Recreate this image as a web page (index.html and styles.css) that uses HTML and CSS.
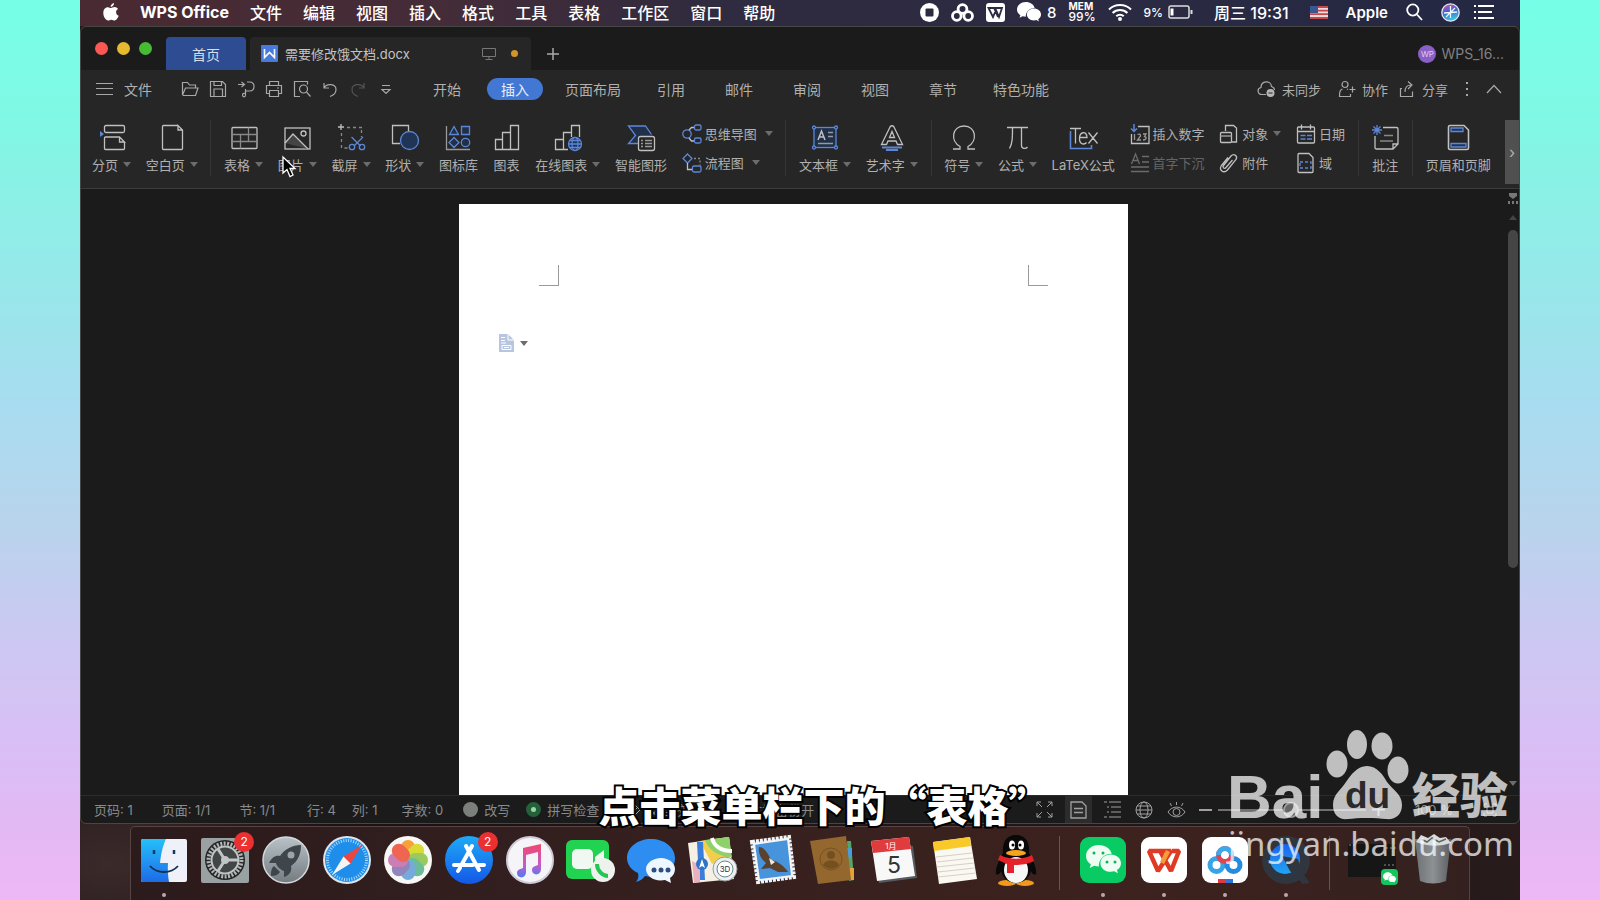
FILE: index.html
```html
<!DOCTYPE html>
<html lang="zh-CN">
<head>
<meta charset="UTF-8" />
<meta name="viewport" content="width=device-width, initial-scale=1" />
<title>需要修改饿文档.docx</title>
<link rel="stylesheet" href="styles.css">
</head>
<body>
<svg class="sprite" aria-hidden="true">
  <symbol id="wechat" viewBox="0 0 34 28">
    <path d="M12.500 0C5.600 0 0 4.700 0 10.500c0 3.300 1.800 6.200 4.700 8.100L3.600 22.300l4.300-2.200c1.500.4 3 .7 4.600.7C12.100 14.500 17.300 8.500 25 8.500 23.800 3.600 18.700 0 12.500 0z"/>
    <path d="M34 17.600C34 12.900 29.500 9.200 24 9.200s-10 3.700-10 8.400S18.500 26 24 26c1.200 0 2.400-.2 3.500-.5l3.500 1.900-.9-3.100c2.400-1.500 3.900-4 3.900-6.700z"/>
  </symbol>
  <symbol id="bars" viewBox="0 0 28 28">
    <path d="M2.500 16.500h7v10h-7zM9.500 9.500h8v17h-8zM17.500 2.500h8v24h-8z"/>
  </symbol>
</svg>
<div class="desktop">
  <header class="menubar">
    <nav class="menubar-nav">
      <button class="apple" aria-label="苹果菜单"><svg width="16" height="18" viewBox="0 0 16 18" fill="#fff"><path d="M11 0c.2 1.500-1.300 3.900-3.300 3.900C7.400 2.200 9.200.3 11 0zM8 5c.8 0 1.900-1 3.600-1 1.300 0 2.600.7 3.400 1.900-2.900 1.700-2.400 5.600.7 6.900-.7 1.900-2.300 4.700-4 4.700-1.300 0-1.700-.8-3.300-.8s-2.100.8-3.300.8C2.700 17.500.3 13.600.3 10 .3 6.300 2.500 4.200 4.800 4.200 6.200 4.200 7.300 5 8 5z"/></svg></button>
      <button class="app-name">WPS Office</button>
      <button>文件</button>
      <button>编辑</button>
      <button>视图</button>
      <button>插入</button>
      <button>格式</button>
      <button>工具</button>
      <button>表格</button>
      <button>工作区</button>
      <button>窗口</button>
      <button>帮助</button>
    </nav>
    <div class="tray">
      <div class="tray-apps">
        <svg width="19" height="19" viewBox="0 0 19 19"><circle cx="9.500" cy="9.500" r="9.500" fill="#fff"/><rect x="5.500" y="5.500" width="8" height="8" rx="1" fill="#2c2b42"/></svg>
        <svg width="23" height="19" viewBox="0 0 23 19" fill="none" stroke="#fff" stroke-width="2.800"><circle cx="11.500" cy="6" r="4.400"/><circle cx="5.800" cy="13" r="4.300"/><circle cx="17.200" cy="13" r="4.300"/></svg>
        <svg width="19" height="19" viewBox="0 0 19 19"><rect width="19" height="19" rx="3" fill="#fff"/><path d="M2.500 5h13.500l-3 9-3-7-3 7zM8 5l4 9" fill="none" stroke="#2c2b42" stroke-width="1.800"/></svg>
        <span class="tray-count"><svg width="24" height="20" fill="#fff"><use href="#wechat"/></svg>8</span>
        <span class="mem"><b>MEM</b><span>99%</span></span>
        <svg width="24" height="18" viewBox="0 0 24 18" fill="none" stroke="#fff" stroke-width="2"><path d="M1 6.500c6-6 16-6 22 0M4.600 10c4-4 10.800-4 14.800 0M8.300 13.300c2-2 5.400-2 7.400 0"/><circle cx="12" cy="16" r="1" fill="#fff"/></svg>
        <span class="battery">9%<svg width="25" height="14" viewBox="0 0 25 14" fill="none" stroke="#ddd"><rect x="1" y="1" width="20" height="12" rx="2" stroke-width="1.500"/><path d="M4 3.500v7" stroke="#fff" stroke-width="3"/><path d="M23.500 5v4" stroke-width="2"/></svg></span>
      </div>
      <span class="clock">周三 19:31</span>
      <svg class="flag" width="18" height="13" viewBox="0 0 18 13"><path fill="#e8dcdc" d="M0 0h18v13H0z"/><path d="M0 1h18M0 4.600h18M0 8.200h18M0 12h18" stroke="#c8474d" stroke-width="1.800"/><path fill="#3b5690" d="M0 0h8v7H0z"/></svg>
      <b class="account">Apple</b>
      <svg width="17" height="18" viewBox="0 0 17 18" fill="none" stroke="#fff" stroke-width="1.800"><circle cx="6.800" cy="7" r="5.600"/><path d="M11 11.500l5 5.500"/></svg>
      <svg width="19" height="19" viewBox="0 0 19 19"><defs><linearGradient id="siri" x2="0.300" y2="1"><stop stop-color="#ee4fae"/><stop offset=".5" stop-color="#3f63c9"/><stop offset="1" stop-color="#38c4e6"/></linearGradient></defs><circle cx="9.500" cy="9.500" r="8.700" fill="url(#siri)" stroke="#e8e8f4" stroke-width="1.300"/><path d="M3 10l13-1M9.500 3v12M5 14l9-9" stroke="#eaf6ff" stroke-width="1.300"/></svg>
      <svg class="list" width="20" height="14" viewBox="0 0 20 14" stroke="#fff" stroke-width="2"><path d="M0 1h2M4 1h16M0 7h2M4 7h14M0 13h2M4 13h16"/></svg>
    </div>
  </header>

  <div class="window">
    <div class="titlebar">
      <div class="lights"><button class="light red" aria-label="关闭"></button><button class="light yellow" aria-label="最小化"></button><button class="light green" aria-label="全屏"></button></div>
      <button class="home-tab">首页</button>
      <div class="doc-tab">
        <svg width="17" height="17" viewBox="0 0 17 17"><rect width="17" height="17" rx="1" fill="#477bdb"/><path d="M3.500 4v8.500l5-5 5 5V4" fill="none" stroke="#fff" stroke-width="1.600"/></svg>
        <span class="doc-name">需要修改饿文档.docx</span>
        <svg width="14" height="14" viewBox="0 0 14 14" fill="none" stroke="#777"><path d="M.5 1.500h13v8H.5zM7 9.500v3M3.500 12.500h7"/></svg>
        <i class="unsaved"></i>
      </div>
      <button class="new-tab" aria-label="新建标签"><svg width="12" height="12" viewBox="0 0 12 12" stroke="#aaa" stroke-width="1.500"><path d="M6 0v12M0 6h12"/></svg></button>
      <button class="user"><span class="avatar">WP</span>WPS_16...</button>
    </div>

    <div class="menurow">
      <button class="file-btn"><svg width="17" height="14" viewBox="0 0 17 14" stroke="#8c8c8c"><path d="M0 1.500h17M0 6.500h17M0 12.500h17"/></svg>文件</button>
      <div class="quick">
        <button aria-label="打开"><svg viewBox="0 0 18 18"><path d="M1.500 15V2.500h5l2 2.500h6v3M1.500 15l3-7H17l-2.500 7.500h-13"/></svg></button>
        <button aria-label="保存"><svg viewBox="0 0 18 18"><path d="M1.500 1.500h12l3 3v12h-15zM5 16V9h8.500v7M5 1.500v4h7.500v-4"/></svg></button>
        <button aria-label="转换"><svg viewBox="0 0 18 18"><path d="M1 4.500h6M4.500 2l3 2.500-3 2.500M10 2h2.500c6 0 6 9 0 9H8.500v4c0 2.500-3 2.500-3 0 0-2 1.500-1.500 3-1.500M8.500 11V9"/></svg></button>
        <button aria-label="打印"><svg viewBox="0 0 18 18"><path d="M4.500 5V1.500h9V5M4 13.500H1.500v-8h15v8H14M4.500 10.500h9v6h-9zM12 8h2"/></svg></button>
        <button aria-label="打印预览"><svg viewBox="0 0 18 18"><path d="M7 16.500H1.500v-15h13v3"/><circle cx="10.500" cy="9" r="4"/><path d="M13.500 12l4 4.500"/></svg></button>
        <button aria-label="撤销"><svg viewBox="0 0 18 18"><path d="M3 3v5h5M3 8c2.500-5 12-4.500 12 1.500 0 4-3 6-6 7"/></svg></button>
        <button class="off" aria-label="恢复" disabled><svg viewBox="0 0 18 18"><path d="M15 3v5h-5M15 8C12.500 3 3 3.500 3 9.500c0 4 3 6 6 7"/></svg></button>
        <button aria-label="更多"><svg viewBox="0 0 18 18"><path d="M5 5.500h8M5 9.500l4 4 4-4z"/></svg></button>
      </div>
      <nav class="tabs">
        <button>开始</button>
        <button class="active">插入</button>
        <button class="long">页面布局</button>
        <button>引用</button>
        <button>邮件</button>
        <button>审阅</button>
        <button>视图</button>
        <button>章节</button>
        <button class="long">特色功能</button>
      </nav>
      <div class="share">
        <button><svg width="19" height="18" viewBox="0 0 19 18"><path d="M9 14.500H5C.5 14.500-.5 8.500 4 7.500 4 .5 14 0 14.500 6.500c1.500.5 3 1.500 3 3.500"/><circle cx="13.500" cy="13" r="4" fill="#b5b5b5" stroke="none"/><path d="M11.500 13h4" stroke="#262626"/></svg>未同步</button>
        <div class="share-pair">
          <button><svg width="18" height="18" viewBox="0 0 18 18"><circle cx="7" cy="4.500" r="3"/><path d="M4.500 9C2 10 1.500 11.500 1.500 16.500h11V14M11.500 9.500h6M14.500 6.500v6M9 9l1 .5"/></svg>协作</button>
          <button><svg width="17" height="18" viewBox="0 0 17 18"><path d="M3 8.500H1.500v8h12v-5M6 12c0-5 2-7 6-7M9 1.500L13 5 9 9"/></svg>分享</button>
        </div>
        <button aria-label="更多选项"><svg width="4" height="14" viewBox="0 0 4 14"><path d="M2 0v2M2 6v2M2 12v2" stroke-width="2"/></svg></button>
        <button aria-label="收起功能区"><svg width="16" height="10" viewBox="0 0 16 10"><path d="M1 9l7-7.500L15 9"/></svg></button>
      </div>
    </div>

    <div class="ribbon">
      <div class="tools">
        <button class="tool"><svg class="icon" viewBox="0 0 28 28"><rect x="6.500" y="2.500" width="20" height="7" rx="1.500"/><path d="M26.500 19v6.500q0 1-1 1h-18q-1 0-1-1V15q0-1 1-1h14l5 5h-5v-5"/><path class="blue-fill" d="M2 8v6l4-3z"/></svg><span class="drop">分页</span></button>
        <button class="tool"><svg class="icon" viewBox="0 0 28 28"><path d="M20 2.500H5.500q-1 0-1 1v22q0 1 1 1h18q1 0 1-1V7l-4.500-4.500V7h4.500"/></svg><span class="drop">空白页</span></button>
        <i class="sep"></i>
        <button class="tool"><svg class="icon" viewBox="0 0 28 28"><rect x="2" y="4.500" width="25" height="21" rx="1"/><path d="M2 11.500h25M2 18.500h25M10.500 11.500v14M18.500 4.500v14" stroke="#888"/></svg><span class="drop">表格</span></button>
        <button class="tool"><svg class="icon" viewBox="0 0 28 28"><rect x="2" y="5" width="25" height="21"/><path d="M2 20l8-9 15 15" fill="#444"/><circle cx="20.500" cy="10.500" r="2.500"/></svg><span class="drop">图片</span></button>
        <button class="tool"><svg class="icon" viewBox="0 0 28 28"><path d="M4 1v6M1 4h6"/><path d="M10 4.500h15M24.500 7v7M4.500 10v15h6" stroke="#888" stroke-dasharray="3 3"/><g class="blue"><path d="M14.500 14l9 9M26 14l-9 9"/><circle cx="15" cy="24" r="2.700"/><circle cx="25" cy="24" r="2.700"/></g></svg><span class="drop">截屏</span></button>
        <button class="tool"><svg class="icon" viewBox="0 0 28 28"><path d="M9 20.500H1.500v-18h16V8"/><circle class="blue" cx="18.500" cy="17.500" r="9" fill="#203556"/></svg><span class="drop">形状</span></button>
        <button class="tool"><svg class="icon" viewBox="0 0 28 28"><path d="M2.500 3v23.500H26" stroke="#999"/><g class="blue" fill="#203048"><path d="M10 3.500l4.500 8h-9zM17.500 3.500h8v8h-8zM10 14.500l5 5-5 5-5-5z"/><circle cx="21.500" cy="19.500" r="4.200"/></g></svg><span>图标库</span></button>
        <button class="tool"><svg class="icon"><use href="#bars"/></svg><span>图表</span></button>
        <button class="tool"><svg class="icon" viewBox="0 0 28 28"><path d="M14 26.500H1.500v-10h8V27M9.500 16V9.500h8V14M17.500 9V2.500h8V14"/><g class="blue" fill="#203556"><circle cx="21" cy="21" r="6.500"/><ellipse cx="21" cy="21" rx="3" ry="6.500"/><path d="M14.500 21h13M16 17.500h10M16 24.500h10"/></g></svg><span class="drop">在线图表</span></button>
        <button class="tool"><svg class="icon" viewBox="0 0 28 28"><path class="blue" d="M11 20.500H1.500l7-8-7-9.500h17l6 8.500" fill="#203048"/><rect x="11.500" y="13.500" width="16" height="14" rx="2" fill="#262626"/><path d="M14 17.500h2M18 17.500h7M14 20.500h2M18 20.500h7M14 23.500h2M18 23.500h7" stroke="#999"/></svg><span>智能图形</span></button>
        <div class="stack">
          <button class="row-tool"><svg class="small" viewBox="0 0 20 20"><circle class="blue" cx="5" cy="10" r="4.200"/><path d="M7 6l2.500-2.500h3M7 14l2.500 3h3"/><rect class="blue" x="12.500" y="1" width="6.500" height="5" rx="1.500"/><rect class="blue" x="12.500" y="14" width="6.500" height="5" rx="1.500"/></svg><span class="drop wide">思维导图</span></button>
          <button class="row-tool"><svg class="small" viewBox="0 0 20 20"><path class="blue" d="M5.500 1l4.500 4.500L5.500 10 1 5.500z"/><path d="M5.500 10v6.500h5"/><path d="M12 5.500h6v7" stroke="#888" stroke-dasharray="2 2"/><rect class="blue" x="10.500" y="13" width="8.500" height="6" rx="1.500"/></svg><span class="drop wide">流程图</span></button>
        </div>
        <i class="sep"></i>
        <button class="tool"><svg class="icon" viewBox="0 0 28 28"><rect class="blue" x="3" y="4.500" width="22" height="20" fill="#203048"/><path d="M7 17l3.500-9 3.500 9M8.500 14h4" stroke-width="1.500"/><path d="M17 9.500h5M17 13.500h5M7 20.500h15" stroke="#999"/><g class="blue" fill="#262626"><circle cx="3" cy="4.500" r="1.500"/><circle cx="25" cy="4.500" r="1.500"/><circle cx="3" cy="24.500" r="1.500"/><circle cx="25" cy="24.500" r="1.500"/></g></svg><span class="drop">文本框</span></button>
        <button class="tool"><svg class="icon" viewBox="0 0 28 28"><path d="M3.500 21.500L12 4q2-2.500 4 0l8.500 17.500h-5L18 18h-8l-1.500 3.500zM11.500 14.500h5L14 8.500z"/><path class="blue" d="M4 24.500h20M8 27h12" stroke-width="2"/></svg><span class="drop">艺术字</span></button>
        <i class="sep"></i>
        <button class="tool"><svg class="icon" viewBox="0 0 28 28"><path d="M3 26h7v-2.500C0 18 2 3 14 3s14 15 4 20.500V26h7"/></svg><span class="drop">符号</span></button>
        <button class="tool"><svg class="icon" viewBox="0 0 28 28"><path d="M4 4.500h21M9.500 4.500c0 10 0 16-3 21M18.500 4.500v18c0 3 4 4 6 1.500"/></svg><span class="drop">公式</span></button>
        <button class="tool"><svg class="icon" viewBox="0 0 28 28"><path class="blue" d="M1.500 8v17.500h21V22" stroke-width="1.600"/><path d="M1 5.500h11M6.500 5.500v15M10.500 14.500h7.500c0-7-7.500-6-7.500 1s5.500 6 7 4M19.500 9.500l9 11M28.500 9.500l-9 11"/></svg><span>LaTeX公式</span></button>
        <div class="stack">
          <button class="row-tool"><svg class="small" viewBox="0 0 20 20"><path d="M8 2.500h11v17H1.500V10" /><path class="blue" d="M4 0v7M1 4.500L4 7.500l3-3" stroke-width="1.500"/><path d="M4.500 10v6M7.500 10.500q3.500-1 3 1.500l-3 4h3.500M13 10h3l-1.500 2.500q2 .5 1.500 2t-3 1.500" stroke="#999"/></svg><span>插入数字</span></button>
          <button class="row-tool off" disabled><svg class="small" viewBox="0 0 20 20"><path d="M1.500 11L5.500 1l4 10M3 7.500h5M12 3.500h7M12 9h7M1 14h18M1 18.500h18"/></svg><span>首字下沉</span></button>
        </div>
        <div class="stack">
          <button class="row-tool"><svg class="small" viewBox="0 0 20 20"><path d="M6.500 7V1.500h8L17.500 4v14h-5"/><rect x="1.500" y="8.500" width="11" height="10" rx="1"/><path d="M1.500 12h11" stroke="#999"/></svg><span class="drop">对象</span></button>
          <button class="row-tool"><svg class="small" viewBox="0 0 20 20"><path d="M13.500 7l-6.500 7.500c-1.500 2-4 0-2.500-2L12 3c3-3 7 0 5 3.500L8.500 17c-4 4-9 0-6-4.500L9 4.500"/></svg><span>附件</span></button>
        </div>
        <div class="stack">
          <button class="row-tool"><svg class="small" viewBox="0 0 20 20"><rect x="1.500" y="3" width="17" height="16" rx="1"/><path d="M1.500 7.500h17M5.500 .5v5M14.500 .5v5"/><path class="blue" d="M4.500 11.500h5M11 11.500h5M4.500 15h5M11 15h5" stroke-width="1.500"/></svg><span>日期</span></button>
          <button class="row-tool"><svg class="small" viewBox="0 0 20 20"><path d="M13 .5H3q-1 0-1 1v17q0 1 1 1h13q1 0 1-1V4.500z"/><path class="blue" d="M4 9h11v6H4z" stroke-dasharray="3 2"/></svg><span>域</span></button>
        </div>
        <i class="sep"></i>
        <button class="tool"><svg class="icon" viewBox="0 0 28 28"><path d="M12 4.500h13.500q1.500 0 1.500 1.500v15l-5 5H5.500Q4 26 4 24.500V13M22 26v-5h5"/><path d="M13 12.500h9M9 18h13" stroke="#888"/><path class="blue" d="M6 2v10M1 7h10M2.500 3.500l7 7M9.500 3.500l-7 7"/></svg><span>批注</span></button>
        <i class="sep"></i>
        <button class="tool"><svg class="icon" viewBox="0 0 28 28"><path d="M20 2.500H6Q4.500 2.500 4.500 4v21q0 1.500 1.500 1.500h17q1.500 0 1.500-1.500V7z" stroke-width="1.600"/><path class="blue" d="M7 5h12v3.500H7zM7 20.500h15V24H7z" fill="#203556"/></svg><span>页眉和页脚</span></button>
      </div>
      <button class="expander" aria-label="展开">›</button>
    </div>

    <div class="workspace">
      <main class="canvas">
        <div class="page">
          <div class="margins"><i class="mark left"></i><i class="mark right"></i></div>
          <button class="paste-opt" aria-label="文档选项"><svg width="15" height="18" viewBox="0 0 15 18"><path fill="#b7c5e0" d="M0 0h9l6 6v12H0z"/><path d="M9 0v6h6M2 3.500h4M2 6.500h4M2 9h5M3 11.500h9v4H3zM5 13.500h5" fill="none" stroke="#fff"/></svg></button>
        </div>
      </main>
      <div class="scroll">
        <svg width="12" height="12" viewBox="0 0 12 12" fill="#777"><path d="M2 0h8v3L6 6 2 3zM1 8h2v3H1zM5 8h2v3H5zM9 8h2v3H9z"/></svg>
        <i class="tri up"></i>
        <i class="thumb"></i>
        <i class="tri"></i>
      </div>
    </div>

    <footer class="status">
      <div class="counts"><span>页码: 1</span><span>页面: 1/1</span><span>节: 1/1</span></div>
      <div class="cursor-pos"><span>行: 4</span><span>列: 1</span></div>
      <span>字数: 0</span>
      <div class="modes">
        <button><i class="led"></i>改写</button>
        <button><i class="led on"></i>拼写检查</button>
      </div>
      <button class="proof"><svg width="14" height="14" viewBox="0 0 14 14"><path d="M7 1L1 7l6 6 6-6zM4 7l2 2 4-4"/></svg>文档校对</button>
      <button class="backup">本地备份开</button>
      <div class="controls">
        <div class="views">
          <button aria-label="全屏显示"><svg width="17" height="17" viewBox="0 0 17 17"><path d="M1 5V1h4M1 1l5 5M12 1h4v4M16 1l-5 5M1 12v4h4M1 16l5-5M16 12v4h-4M16 16l-5-5"/></svg></button>
          <button class="current" aria-label="页面视图"><svg width="17" height="18" viewBox="0 0 17 18"><path d="M1 1h11l4 4v12H1zM4 7.500h9M4 11.500h9" stroke-width="1.300"/></svg></button>
          <button aria-label="大纲视图"><svg width="17" height="17" viewBox="0 0 17 17"><path d="M0 1h3M5 1h12M3 6h2M7 6h10M3 11h2M7 11h10M0 16h3M5 16h12"/></svg></button>
          <button aria-label="网页视图"><svg width="18" height="18" viewBox="0 0 18 18"><circle cx="9" cy="9" r="8"/><ellipse cx="9" cy="9" rx="4" ry="8"/><path d="M1 9h16M2 5h14M2 13h14"/></svg></button>
          <button aria-label="护眼模式"><svg width="19" height="18" viewBox="0 0 19 18"><path d="M1 11c4-6.500 13-6.500 17 0-4 6.500-13 6.500-17 0zM9.500 1v3M3 2l1.500 3M16 2l-1.500 3"/><circle cx="9.500" cy="11" r="3.500"/></svg></button>
        </div>
        <div class="zoom">
          <button aria-label="缩小"><svg width="13" height="2"><path d="M0 1h13" stroke-width="2"/></svg></button>
          <input type="range" min="0" max="100" value="49" aria-label="缩放">
          <button aria-label="放大"><svg width="13" height="13"><path d="M0 6.500h13M6.500 0v13" stroke-width="2"/></svg></button>
          <span>100 %</span>
          <button aria-label="适合页面"><svg width="14" height="14" viewBox="0 0 14 14"><path d="M1 4V1h3M10 1h3v3M13 10v3h-3M4 13H1v-3M4 4h6v6H4z"/></svg></button>
        </div>
      </div>
    </footer>
  </div>

  <ul class="dock">
    <li class="running"><svg viewBox="0 0 48 48"><defs><linearGradient id="fb" x2="0" y2="1"><stop stop-color="#25c0f8"/><stop offset="1" stop-color="#1e6be8"/></linearGradient></defs><rect x="1" y="3" width="46" height="43" rx="2" fill="#eef1fa"/><path fill="url(#fb)" d="M3 3h23c-4 9-5 16-6 24h8c-.5 7 0 13 1 19H3q-2 0-2-2V5q0-2 2-2z"/><path d="M14 14v4M34 14v4" stroke="#153a5c" stroke-width="2.500"/><path d="M10 30c7 8 21 8 28 0" fill="none" stroke="#15304c" stroke-width="1.800"/></svg></li>
    <li><svg viewBox="0 0 48 48"><rect y="2" width="48" height="45" rx="2" fill="#99a1a3"/><circle cx="24" cy="24" r="20" fill="#242526"/><circle cx="24" cy="24" r="16.500" fill="none" stroke="#b0b4b5" stroke-width="4" stroke-dasharray="2 1.450"/><circle cx="24" cy="24" r="13.500" fill="#434647" stroke="#c1c4c5" stroke-width="2"/><path d="M24 24h13M24 24l-7-11M24 24l-7 11" stroke="#c1c4c5" stroke-width="3"/><circle cx="24" cy="24" r="4" fill="#c1c4c5"/></svg><b class="badge">2</b></li>
    <li><svg viewBox="0 0 48 48"><defs><linearGradient id="rk" x2="0" y2="1"><stop stop-color="#b9c3c7"/><stop offset="1" stop-color="#747b80"/></linearGradient></defs><circle cx="24" cy="24" r="23" fill="url(#rk)" stroke="#d4d9dc" stroke-width="1.500"/><path fill="#3e454b" d="M39 9c-9 0-16 4-21 11-4-1-8 1-11 7l7 0c0 2 4 7 8 8l0 6c6-2 8-6 7-11 7-5 10-12 10-21zM12 30c-3 2-3 7-3 10 4 0 7-1 9-4z"/><circle cx="29" cy="19" r="3.500" fill="#9ba4a9"/></svg></li>
    <li><svg viewBox="0 0 48 48"><circle cx="24" cy="24" r="24" fill="#dfe5ea"/><circle cx="24" cy="24" r="22" fill="#1f8eea"/><circle cx="24" cy="24" r="19.500" fill="none" stroke="#a9d9ff" stroke-width="3" stroke-dasharray="1 1.500"/><path fill="#f0443e" d="M39 9L27.500 27.500l-7-7z"/><path fill="#f4f4f4" d="M9 39l11.500-18.500 7 7z"/></svg></li>
    <li><svg viewBox="0 0 48 48"><circle cx="24" cy="24" r="24" fill="#f7f7f5"/><g opacity=".92"><rect x="17" y="4" width="14" height="20" rx="7" fill="#f79a28"/><rect x="17" y="4" width="14" height="20" rx="7" fill="#d7d925" transform="rotate(45 24 24)"/><rect x="17" y="4" width="14" height="20" rx="7" fill="#93c751" transform="rotate(90 24 24)"/><rect x="17" y="4" width="14" height="20" rx="7" fill="#61b795" transform="rotate(135 24 24)"/><rect x="17" y="4" width="14" height="20" rx="7" fill="#6ba4d8" transform="rotate(180 24 24)"/><rect x="17" y="4" width="14" height="20" rx="7" fill="#8a7cb8" transform="rotate(225 24 24)"/><rect x="17" y="4" width="14" height="20" rx="7" fill="#c774b0" transform="rotate(270 24 24)"/><rect x="17" y="4" width="14" height="20" rx="7" fill="#ee5a45" transform="rotate(315 24 24)"/></g></svg></li>
    <li><svg viewBox="0 0 48 48"><defs><linearGradient id="as" x2="0" y2="1"><stop stop-color="#1eaaf7"/><stop offset="1" stop-color="#1457e6"/></linearGradient></defs><circle cx="24" cy="24" r="24" fill="url(#as)"/><path d="M21 10l13 24M27 10L17 28M15 32l-2 3M9 29h19M34 29h5" stroke="#fff" stroke-width="4" stroke-linecap="round"/></svg><b class="badge">2</b></li>
    <li><svg viewBox="0 0 48 48"><defs><linearGradient id="mu" x2="0" y2="1"><stop stop-color="#f0466a"/><stop offset=".6" stop-color="#c95bc4"/><stop offset="1" stop-color="#4d7df2"/></linearGradient></defs><circle cx="24" cy="24" r="23" fill="#f5f4f8" stroke="#cfcbd6" stroke-width="2"/><path fill="url(#mu)" d="M17 12l18-4v25c0 7-9 7-9 1 0-4 4-4 6-5V16l-12 3v17c0 7-9 7-9 1 0-4 4-4 6-5z"/></svg></li>
    <li><svg viewBox="0 0 48 48"><rect y="4" width="43" height="39" rx="6" fill="#22d352"/><rect x="6" y="13" width="21" height="20" rx="5" fill="#f1f8f1"/><path fill="#f1f8f1" d="M29 21l9-7v18l-9-6z"/><circle cx="37" cy="34" r="12" fill="#eef1ee"/><path d="M31 28c0 6 5 12 11 12" fill="none" stroke="#23c653" stroke-width="4"/></svg></li>
    <li><svg viewBox="0 0 48 48"><path fill="#2d8df1" d="M24 3c13 0 24 8 24 19S38 41 24 41l-6-1c-2 3-5 5-9 6 2-3 3-5 2-9C4 34 0 28 0 22 0 11 11 3 24 3z"/><path fill="#eef6ff" d="M34 22c8 0 14 5 14 11 0 4-2 7-5 9l1 5-6-3c-11 2-19-4-19-11 0-6 7-11 15-11z"/><g fill="#2c4d7d"><circle cx="27" cy="34" r="2.500"/><circle cx="34" cy="34" r="2.500"/><circle cx="41" cy="34" r="2.500"/></g></svg></li>
    <li><svg viewBox="0 0 48 48"><path fill="#f5f0e3" d="M0 7l41-6 5 42-41 4z"/><path fill="#f3ce4a" d="M12 5l12 23 19-8-2-19z"/><path fill="#8ed06b" d="M17 4c3 10 14 17 27 17L41 1z"/><path d="M24 2c2 8 9 13 20 13" fill="none" stroke="#fff" stroke-width="4"/><path fill="#3b7ddb" d="M9 6h6l2 38h-6z"/><path fill="#e8b1bd" d="M4 25l8 4v17l-6 1z"/><circle cx="14" cy="28" r="6" fill="#2e74c8"/><path fill="#fff" d="M14 23l3 9-3-2-3 2z"/><circle cx="37" cy="33" r="12" fill="#edf0f3" stroke="#999"/><circle cx="37" cy="33" r="8" fill="#fff" stroke="#688"/><text x="37" y="36" font-size="8" text-anchor="middle" fill="#333">3D</text></svg></li>
    <li><svg viewBox="0 0 48 48"><path d="M3 6l37-5 5 40-36 5z" fill="#4a95dd" stroke="#f4f4f4" stroke-width="4" stroke-dasharray="3 1"/><path d="M5 8l34-5 4 37-33 4z" fill="#4793dc" stroke="#f4f4f4" stroke-width="2"/><path fill="#5a422e" d="M10 11c5 0 9 6 12 13 7 1 14 7 17 12l-10 0-8-4-9 1 5-6c-5-4-8-9-7-16z"/><path fill="#f1ece2" d="M20 22l6 4-4 3z"/></svg></li>
    <li><svg viewBox="0 0 48 48"><path fill="#52a56b" d="M37 5l4 0 3 39-5 1z"/><path fill="#4a9ed8" d="M37 12h5v10h-4z"/><path fill="#e5a13e" d="M39 32h5v12h-4z"/><path fill="#93672e" d="M0 5l36-5 5 44-33 4z"/><circle cx="21" cy="23" r="11" fill="none" stroke="#7a5220"/><circle cx="21" cy="19" r="4" fill="#75501f"/><path fill="#75501f" d="M13 29c2-6 14-6 16 0-4 5-12 5-16 0z"/></svg></li>
    <li><svg viewBox="0 0 48 48"><path fill="#555a60" d="M2 10h40l4 32-38 5z"/><path fill="#f8f8f8" d="M0 5l38-4 6 39-38 5z"/><path fill="#e03b3d" d="M0 5l38-4 2 12-38 4z"/><text x="20" y="13" font-size="8" text-anchor="middle" fill="#fff">1月</text><text x="23" y="37" font-size="23" text-anchor="middle" fill="#333">5</text></svg></li>
    <li><svg viewBox="0 0 48 48"><path fill="#faf8f0" d="M1 6l37-5 7 42-38 5z"/><path fill="#f8c928" d="M1 6l37-5 1 9-37 5z"/><path d="M4 21l36-4M5 26l36-4M5 31l37-4M6 36l37-4M6 41l38-4" stroke="#d4d1c8"/></svg></li>
    <li><svg viewBox="0 0 48 48"><ellipse cx="15" cy="47" rx="9" ry="3" fill="#f39a1d"/><ellipse cx="33" cy="47" rx="9" ry="3" fill="#f39a1d"/><path fill="#090909" d="M24-1c10 0 14 8 13 18 3 6 8 14 7 21-2 2-4-1-5-3-2 7-7 12-15 12S11 42 9 35c-1 2-3 5-5 3-1-7 4-15 7-21C10 7 14-1 24-1z"/><ellipse cx="24" cy="34" rx="12" ry="13" fill="#f7f7f7"/><ellipse cx="20" cy="9" rx="3" ry="4.500" fill="#fff"/><ellipse cx="29" cy="9" rx="3" ry="4.500" fill="#fff"/><circle cx="21" cy="9" r="1.500"/><circle cx="28" cy="9" r="1.500"/><ellipse cx="24" cy="17" rx="10" ry="3" fill="#f3a61e"/><path fill="#e5222b" d="M8 19c10 5 22 5 32 0l2 6c-8 4-16 4-20 4v8h-7v-9l-9-4z"/></svg></li>
    <li class="dock-sep"></li>
    <li class="running"><svg viewBox="0 0 48 48"><rect x="1" y="1" width="46" height="46" rx="9" fill="#08cb63"/><g fill="#effcf3"><use href="#wechat" x="7" y="9" width="35" height="29"/></g><g fill="#08b85a"><circle cx="15" cy="17" r="1.500"/><circle cx="24" cy="17" r="1.500"/><circle cx="28" cy="26" r="1.500"/><circle cx="36" cy="26" r="1.500"/></g></svg></li>
    <li class="running"><svg viewBox="0 0 48 48"><rect x="1" y="1" width="46" height="46" rx="9" fill="#fff"/><path d="M9 15h22l-13 20zM20 15l11 20 8-20h-7" fill="none" stroke="#df3b24" stroke-width="4.500" stroke-linejoin="bevel"/><path d="M28 15l-6 12" stroke="#f59b38" stroke-width="4.500"/></svg></li>
    <li class="running"><svg viewBox="0 0 48 48"><rect x="1" y="1" width="46" height="46" rx="9" fill="#fff"/><g fill="none" stroke-width="5"><circle cx="15.500" cy="29" r="6.500" stroke="#35a5e8"/><circle cx="32.500" cy="29" r="6.500" stroke="#248be0"/><circle cx="24" cy="19" r="6.500" stroke="#e0454f"/><path d="M17.500 19a6.500 6.500 0 0 1 13 0" stroke="#3ba9ea"/></g><path d="M17 45h8" stroke="#dd3b42" stroke-width="4"/><path d="M25 45h7" stroke="#2d74d8" stroke-width="4"/></svg></li>
    <li class="running"><svg viewBox="0 0 48 48"><defs><linearGradient id="qt" x2="0" y2="1"><stop stop-color="#1c62ee"/><stop offset="1" stop-color="#22a5f2"/></linearGradient></defs><circle cx="24" cy="24" r="24" fill="#30363f"/><circle cx="23" cy="23" r="15" fill="url(#qt)"/><path fill="#30363f" d="M20 20l16 3 4 13 8 11-7 1-13-13z"/></svg></li>
    <li class="dock-sep"></li>
    <li><svg viewBox="0 0 48 48"><rect y="8" width="48" height="33" fill="#161616"/><path d="M1 9h8M38 12h10M36 29h12" stroke="#888" stroke-dasharray="2 2"/><rect x="33" y="33" width="17" height="16" rx="4" fill="#12c65d"/><g fill="#fff"><use href="#wechat" x="35" y="36" width="13" height="11"/></g></svg></li>
    <li><svg viewBox="0 0 48 48"><defs><linearGradient id="tr"><stop stop-color="#6e7174"/><stop offset=".5" stop-color="#8d9194"/><stop offset="1" stop-color="#5c5f62"/></linearGradient></defs><path fill="url(#tr)" d="M6 3h36l-5 42q-13 5-26 0z"/><path fill="#d8dadb" d="M7 6l5-7 7 3 6-4 6 4 6-1 5 6q-17 6-35-1z"/><path d="M12 3l6 3 5-4 7 4 7-3" fill="none" stroke="#58665c" stroke-width="1.500"/></svg></li>
  </ul>

  <svg class="pointer" width="14" height="22" viewBox="0 0 14 22"><path d="M1 1v16l4-3.500 3 7 3-1.500-3-6.500h5z" fill="#000" stroke="#fff" stroke-width="1.300"/></svg>
  <p class="caption">点击菜单栏下的“表格”</p>
  <svg class="watermark" width="290" height="150" viewBox="0 0 290 150">
    <g fill="#fff" opacity=".72">
      <ellipse cx="110" cy="39" rx="10.500" ry="13.500"/><ellipse cx="130" cy="19.500" rx="10" ry="14.500"/><ellipse cx="155" cy="21" rx="10.500" ry="13.500"/><ellipse cx="171" cy="45" rx="10.500" ry="13.500"/>
      <path d="M140 41c10 0 16 9 20 16 6 8 15 12 15 23 0 10-7 15-16 14-9-1.500-29-1.500-38 0-9 1-15-4-15-14 0-11 8-15 13-23 5-7 11-16 21-16z"/>
      <text class="wm-bai" x="0" y="93">Bai</text>
      <text class="wm-cn" x="185" y="88">经验</text>
      <text class="wm-url" x="1" y="131">jingyan.baidu.com</text>
    </g>
    <text class="wm-du" x="118" y="83">du</text>
  </svg>
</div>
</body>
</html>
```
FILE: styles.css
```css
* {
  box-sizing: border-box;
}
body {
  margin: 0;
  padding: 0 5%;
  height: 100vh;
  overflow: hidden;
  background: linear-gradient(#76ffe8, #80f8e4 13%, #93ebe8 28%, #a8dcf0 45%, #b8d4ec 58%, #cbc9f2 70%, #d8bff5 82%, #e3b9f3 92%, #eeb8f6);
  font-family: Inter, "Noto Sans CJK SC", sans-serif;
  font-size: 13px;
  color: #b0b0b0;
}
button {
  display: flex;
  align-items: center;
  padding: 0;
  border: none;
  background: none;
  color: inherit;
  font: inherit;
  white-space: nowrap;
}
svg {
  display: block;
  flex: none;
  overflow: visible;
}
.sprite {
  position: absolute;
  width: 0;
  height: 0;
}
.desktop {
  position: relative;
  display: flex;
  flex-direction: column;
  height: 100%;
  background: radial-gradient(ellipse at 2% 96%, #3b2a2a, #1b1214 12%, #241819 60%, #33221f);
}

/* macOS menu bar */
.menubar {
  display: flex;
  justify-content: space-between;
  align-items: center;
  height: 26px;
  padding: 0 26px 2px 23px;
  background: linear-gradient(90deg, #4a2a32, #442c38 25%, #2f2b40 45%, #2b2a42 70%, #242843);
  color: #fff;
  font-size: 16px;
  font-weight: 500;
}
.menubar-nav {
  display: flex;
  align-items: center;
  gap: 21px;
}
.app-name {
  font-weight: 700;
}
.tray {
  display: flex;
  align-items: center;
  gap: 18px;
  font-size: 15px;
}
.tray-apps {
  display: flex;
  align-items: center;
  gap: 12px;
}
.tray-count {
  display: flex;
  align-items: center;
  gap: 6px;
}
.mem {
  display: flex;
  flex-direction: column;
  font-size: 12px;
  line-height: 11px;
}
.mem b {
  font-size: 10px;
  line-height: 9px;
}
.battery {
  display: flex;
  align-items: center;
  gap: 5px;
  font-size: 12px;
}
.clock {
  padding: 0 3px;
  font-size: 16px;
}
.account {
  font-weight: 600;
}
.list {
  margin-left: -4px;
}

/* application window */
.window {
  flex: 1;
  min-height: 0;
  display: flex;
  flex-direction: column;
  border: 1px solid #464646;
  border-radius: 6px;
  background: #1b1b1b;
  overflow: hidden;
}
.titlebar {
  display: flex;
  align-items: flex-end;
  gap: 4px;
  height: 43px;
  padding: 0 15px 0 14px;
}
.lights {
  display: flex;
  gap: 9px;
  align-self: center;
  margin-right: 10px;
}
.light {
  width: 13px;
  height: 13px;
  border-radius: 50%;
}
.red { background: #fc5753; }
.yellow { background: #e6b92e; }
.green { background: #46bc33; }
.home-tab {
  justify-content: center;
  width: 80px;
  height: 33px;
  border-radius: 4px 4px 0 0;
  background: #2d4c92;
  color: #d8dce8;
  font-size: 14px;
}
.doc-tab {
  display: flex;
  align-items: center;
  gap: 7px;
  width: 281px;
  height: 33px;
  padding: 0 13px 0 11px;
  border-radius: 4px 4px 0 0;
  background: #262626;
  color: #c4c4c4;
}
.doc-name {
  flex: 1;
}
.unsaved {
  width: 7px;
  height: 7px;
  margin-left: 8px;
  border-radius: 50%;
  background: #d1952a;
}
.new-tab {
  height: 33px;
  padding: 0 12px;
}
.user {
  gap: 5px;
  height: 33px;
  margin-left: auto;
  color: #808080;
  font-size: 14px;
}
.avatar {
  width: 18px;
  height: 18px;
  border-radius: 50%;
  background: #8a60c4;
  color: #ddd0f0;
  font-size: 8px;
  line-height: 18px;
  text-align: center;
}
.menurow {
  display: flex;
  align-items: center;
  height: 40px;
  padding: 0 17px 2px 15px;
  background: #262626;
  font-size: 14px;
}
.menurow svg {
  fill: none;
  stroke: #a8a8a8;
  stroke-width: 1.200;
}
.file-btn {
  gap: 11px;
  margin-right: 29px;
}
.quick {
  display: flex;
  gap: 10px;
}
.quick svg {
  width: 18px;
  height: 18px;
}
.quick .off {
  opacity: .35;
}
.tabs {
  display: flex;
  gap: 12px;
  margin-left: 24px;
}
.tabs button {
  height: 22px;
  padding: 0 14px;
  border-radius: 11px;
}
.tabs .long {
  padding: 0 10px;
}
.tabs .active {
  background: #4377d4;
  color: #e8eefa;
}
.share, .share-pair {
  display: flex;
  align-items: center;
  gap: 17px;
  font-size: 13px;
}
.share {
  margin-left: auto;
}
.share-pair {
  gap: 11px;
}
.share button {
  gap: 6px;
}

/* ribbon */
.ribbon {
  display: flex;
  align-items: flex-end;
  height: 79px;
  padding: 0 0 4px 11px;
  border-bottom: 1px solid #3c3c3c;
  background: #262626;
}
.tools {
  flex: 1;
  display: flex;
  align-items: center;
  justify-content: space-between;
  margin-right: 14px;
  padding-bottom: 8px;
}
.tool {
  flex-direction: column;
  gap: 5px;
  line-height: 18px;
}
.icon, .small {
  width: 28px;
  height: 28px;
  fill: none;
  stroke: #c0c0c0;
  stroke-width: 1.300;
}
.small {
  width: 20px;
  height: 20px;
}
.blue {
  stroke: #5c86d8;
}
.blue-fill {
  fill: #5c86d8;
  stroke: none;
}
.drop {
  display: flex;
  align-items: center;
  gap: 5px;
}
.drop::after, .paste-opt::after, .tri {
  content: "";
  border: 4px solid transparent;
  border-top: 5px solid #6c6c6c;
  border-bottom: 0;
}
.drop.wide {
  gap: 8px;
}
.stack {
  display: flex;
  flex-direction: column;
  gap: 9px;
}
.row-tool {
  gap: 3px;
  line-height: 20px;
}
.row-tool.off {
  opacity: .45;
}
.sep {
  width: 1px;
  height: 56px;
  margin: 0 -2px;
  background: #363636;
}
.expander {
  justify-content: center;
  width: 14px;
  height: 64px;
  background: #505050;
  font-size: 16px;
}

/* document */
.workspace {
  flex: 1;
  min-height: 0;
  display: flex;
}
.canvas {
  flex: 1;
  display: flex;
  justify-content: center;
  padding-top: 15px;
}
.page {
  width: 47%;
  padding: 61px 80px 0;
  background: #fff;
}
.margins {
  display: flex;
  justify-content: space-between;
}
.mark {
  width: 20px;
  height: 21px;
  border-bottom: 1px solid #9a9a9a;
}
.mark.left { border-right: 1px solid #9a9a9a; }
.mark.right { border-left: 1px solid #9a9a9a; }
.paste-opt {
  gap: 6px;
  margin: 48px 0 0 -40px;
}
.scroll {
  display: flex;
  flex-direction: column;
  align-items: center;
  gap: 10px;
  width: 13px;
  padding: 4px 0 9px;
}
.tri.up {
  border-top: 0;
  border-bottom: 5px solid #444;
}
.thumb {
  width: 10px;
  height: 57%;
  margin-bottom: auto;
  border-radius: 5px;
  background: #454545;
}

/* status bar */
.status {
  display: flex;
  align-items: center;
  gap: 20px;
  height: 28px;
  padding: 0 22px 0 13px;
  border-top: 1px solid #2c2c2c;
  color: #8a8a8a;
}
.status span {
  white-space: nowrap;
}
.status svg {
  fill: none;
  stroke: #a0a0a0;
}
.status button {
  gap: 6px;
}
.counts {
  display: flex;
  gap: 29px;
  margin-right: 12px;
}
.cursor-pos {
  display: flex;
  gap: 16px;
  margin-right: 4px;
}
.modes {
  display: flex;
  gap: 16px;
}
.led {
  width: 15px;
  height: 15px;
  border-radius: 50%;
  background: #7b807d;
}
.led.on {
  border: 5px solid #25603a;
  background: #8fdca0;
}
.proof {
  margin-left: 8px;
}
.backup {
  margin-left: 30px;
}
.controls {
  display: flex;
  align-items: center;
  gap: 11px;
  margin-left: auto;
}
.views {
  display: flex;
  align-items: center;
  gap: 10px;
}
.views button {
  padding: 0 2px;
}
.views .current {
  height: 27px;
  padding: 0 5px;
  background: #2c2c2c;
}
.zoom {
  display: flex;
  align-items: center;
  gap: 6px;
}
.zoom span {
  margin: 0 24px;
}
.zoom input {
  appearance: none;
  width: 148px;
  height: 2px;
  margin: 0;
  background: #707070;
}
.zoom input::-webkit-slider-thumb {
  appearance: none;
  width: 16px;
  height: 16px;
  border: 2px solid #999;
  border-radius: 50%;
  background: #666;
}

/* dock */
.dock {
  display: flex;
  justify-content: space-between;
  width: 93%;
  height: 74px;
  margin: 2px auto 0;
  padding: 9px 11px 0 9px;
  border: 1px solid #574342;
  border-bottom: 0;
  border-radius: 5px 5px 0 0;
  background: linear-gradient(90deg, #2c1b1c, #35201f 40%, #3d221e 75%, #34211f);
  list-style: none;
}
.dock li {
  position: relative;
  display: flex;
  flex-direction: column;
  align-items: center;
  gap: 9px;
}
.dock li > svg {
  width: 48px;
  height: 48px;
}
.running::after {
  content: "";
  width: 4px;
  height: 4px;
  border-radius: 50%;
  background: #b9abab;
}
.dock .dock-sep {
  width: 1px;
  height: 54px;
  margin: 0 6px;
  background: #6a5452;
}
.badge {
  position: absolute;
  top: -4px;
  right: -5px;
  width: 20px;
  height: 20px;
  border-radius: 50%;
  background: #ec2f31;
  color: #fff;
  font-size: 12px;
  font-weight: 400;
  line-height: 20px;
  text-align: center;
}

/* overlays */
.pointer {
  position: absolute;
  left: 202px;
  top: 156px;
}
.caption {
  position: absolute;
  left: 36%;
  bottom: 66px;
  margin: 0;
  color: #fff;
  font-family: "Noto Sans CJK SC", sans-serif;
  font-size: 41px;
  font-weight: 900;
  line-height: 60px;
  white-space: nowrap;
  -webkit-text-stroke: 4px #000;
  paint-order: stroke fill;
}
.watermark {
  position: absolute;
  right: 3px;
  bottom: 25px;
}
.wm-bai, .wm-du {
  font-family: "Liberation Sans", sans-serif;
  font-size: 62px;
  font-weight: 700;
}
.wm-du {
  font-size: 37px;
  fill: #2a2a2a;
}
.wm-cn {
  font-family: "Noto Sans CJK SC", sans-serif;
  font-size: 48px;
  font-weight: 900;
}
.wm-url {
  font-family: "Noto Sans", sans-serif;
  font-size: 33px;
}
```
